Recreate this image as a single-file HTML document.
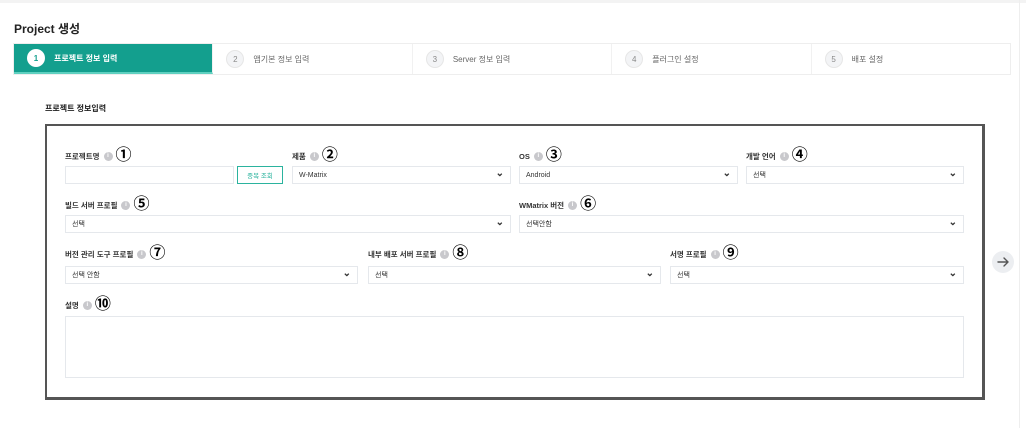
<!DOCTYPE html>
<html><head><meta charset="utf-8"><style>
*{box-sizing:border-box;margin:0;padding:0}
body{width:1026px;height:428px;background:#fff;font-family:"Liberation Sans","Noto Sans CJK KR",sans-serif;position:relative;overflow:hidden;color:#333}
.a{position:absolute}
.topbar{left:0;top:0;width:1026px;height:3px;background:#f3f3f3}
.rline{left:1019px;top:0;width:1px;height:428px;background:#eee}
.title{left:14px;top:20px;font-size:12px;font-weight:bold;color:#222}
.steps{left:13px;top:43px;width:998px;height:32px;border:1px solid #eee;display:flex;background:#fff}
.step{flex:1;display:flex;align-items:center;padding-left:13px;font-size:8px;color:#666;border-right:1px solid #f1f1f1}
.step .n{width:18px;height:18px;border-radius:50%;background:#f3f4f6;border:1px solid #e6e6e6;display:flex;align-items:center;justify-content:center;font-size:8px;color:#888;margin-right:9px}
.step.on{background:#139f8e;color:#fff;font-weight:bold;border-bottom:2px solid #5fd0c0}
.step.on .n{background:#fff;color:#139f8e;font-weight:bold;border:none}
.sec{left:45px;top:103px;font-size:8px;font-weight:bold;color:#222}
.box{left:45px;top:124px;width:940px;height:276px;border:2px solid #555;border-right-width:3px;border-bottom-width:3px}
.lbl{font-size:7.5px;font-weight:bold;color:#333;display:flex;align-items:center;height:14px}
.lbl i{display:inline-flex;align-items:center;justify-content:center;width:9px;height:9px;border-radius:50%;background:#c8c8cc;margin-left:4px;font-style:normal;color:#fff;font-size:6px;font-weight:bold}
.lbl b{font-size:16px;font-weight:bold;color:#000;margin-left:3px;line-height:14px}
.in{height:18px;border:1px solid #e5e8ec;background:#fff;font-size:7px;color:#333;display:flex;align-items:center;padding-left:6px}
.sel:after{content:"⌄";position:absolute;right:6px;top:1px;font-size:10px;color:#333;font-weight:bold}
.btn{left:237px;top:166px;width:46px;height:18px;border:1px solid #2bb39e;color:#2bb39e;font-size:6.5px;display:flex;align-items:center;justify-content:center}
.arrow{left:992px;top:251px;width:22px;height:22px;border-radius:50%;background:#eceef1}
</style></head><body>
<div class="a topbar"></div><div class="a rline"></div>
<div class="a title">Project 생성</div>
<div class="a steps">
<div class="step on"><span class="n">1</span>프로젝트 정보 입력</div>
<div class="step"><span class="n">2</span>앱기본 정보 입력</div>
<div class="step"><span class="n">3</span>Server 정보 입력</div>
<div class="step"><span class="n">4</span>플러그인 설정</div>
<div class="step" style="border-right:none"><span class="n">5</span>배포 설정</div>
</div>
<div class="a sec">프로젝트 정보입력</div>
<div class="a box"></div>

<div class="a lbl" style="left:65px;top:149px">프로젝트명<i>i</i><b>①</b></div>
<div class="a in" style="left:65px;top:166px;width:169px"></div>
<div class="a btn">중복 조회</div>
<div class="a lbl" style="left:292px;top:149px">제품<i>i</i><b>②</b></div>
<div class="a in sel" style="left:292px;top:166px;width:219px">W-Matrix</div>
<div class="a lbl" style="left:519px;top:149px">OS<i>i</i><b>③</b></div>
<div class="a in sel" style="left:519px;top:166px;width:219px">Android</div>
<div class="a lbl" style="left:746px;top:149px">개발 언어<i>i</i><b>④</b></div>
<div class="a in sel" style="left:746px;top:166px;width:218px">선택</div>

<div class="a lbl" style="left:65px;top:198px">빌드 서버 프로필<i>i</i><b>⑤</b></div>
<div class="a in sel" style="left:65px;top:215px;width:446px">선택</div>
<div class="a lbl" style="left:519px;top:198px">WMatrix 버전<i>i</i><b>⑥</b></div>
<div class="a in sel" style="left:519px;top:215px;width:445px">선택안함</div>

<div class="a lbl" style="left:65px;top:247px">버전 관리 도구 프로필<i>i</i><b>⑦</b></div>
<div class="a in sel" style="left:65px;top:266px;width:293px">선택 안함</div>
<div class="a lbl" style="left:368px;top:247px">내부 배포 서버 프로필<i>i</i><b>⑧</b></div>
<div class="a in sel" style="left:368px;top:266px;width:293px">선택</div>
<div class="a lbl" style="left:670px;top:247px">서명 프로필<i>i</i><b>⑨</b></div>
<div class="a in sel" style="left:670px;top:266px;width:294px">선택</div>

<div class="a lbl" style="left:65px;top:298px">설명<i>i</i><b>⑩</b></div>
<div class="a in" style="left:65px;top:316px;width:899px;height:62px"></div>

<div class="a arrow"><svg width="22" height="22" viewBox="0 0 22 22"><path d="M6 11h10M12 7l4 4-4 4" stroke="#555" stroke-width="1.4" fill="none" stroke-linecap="round" stroke-linejoin="round"/></svg></div>
</body></html>
